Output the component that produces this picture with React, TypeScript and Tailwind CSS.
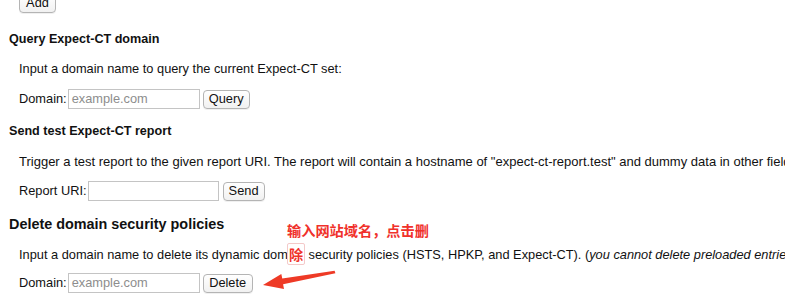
import React from "react";

const font = { fontFamily: '"Liberation Sans", Arial, "Noto Sans CJK SC", sans-serif' };

function Btn({ children, w }: { children: React.ReactNode; w: string }) {
  return (
    <button
      className={`h-[19px] ${w} rounded-[4px] border border-[#b4b4b4] bg-gradient-to-b from-white to-[#f1f1f1] text-[12.8px] leading-none text-[#111] flex items-center justify-center shadow-[0_1px_0_rgba(0,0,0,0.06)]`}
    >
      {children}
    </button>
  );
}

function Input({ placeholder, w }: { placeholder?: string; w: string }) {
  return (
    <div
      className={`h-[20px] ${w} border border-[#c4c4c4] bg-white text-[12.8px] text-[#8d8d8d] flex items-center pl-[3px] leading-none`}
    >
      {placeholder}
    </div>
  );
}

export default function App() {
  return (
    <div
      className="relative w-[785px] h-[295px] overflow-hidden bg-white text-[#111] text-[12.8px]"
      style={font}
    >
      <div className="flex flex-col">
        <div className="mt-[-6px] ml-[19px]">
          <Btn w="w-[37px]">Add</Btn>
        </div>
        <div className="mt-[16px] h-[20px] flex items-center pl-[9px] font-bold text-[12.6px]">
          Query Expect-CT domain
        </div>
        <div className="mt-[10px] h-[20px] flex items-center pl-[19px] whitespace-nowrap">
          Input a domain name to query the current Expect-CT set:
        </div>
        <div className="mt-[10px] h-[20px] flex items-center pl-[19px] gap-[3px]">
          <span className="mr-[-2px]">Domain:</span>
          <Input placeholder="example.com" w="w-[132px]" />
          <Btn w="w-[47px]">Query</Btn>
        </div>
        <div className="mt-[12px] h-[20px] flex items-center pl-[9px] font-bold text-[12.6px]">
          Send test Expect-CT report
        </div>
        <div className="mt-[11px] h-[20px] flex items-center pl-[19px] whitespace-nowrap text-[13px]">
          Trigger a test report to the given report URI. The report will contain a hostname of "expect-ct-report.test" and dummy data in other fields.
        </div>
        <div className="mt-[9px] h-[20px] flex items-center pl-[19px] gap-[3px]">
          <span className="mr-[-2px]">Report URI:</span>
          <Input w="w-[131px]" />
          <span className="ml-[1px]">
            <Btn w="w-[42px]">Send</Btn>
          </span>
        </div>
        <div className="mt-[14px] h-[20px] flex items-center pl-[9px] font-bold text-[14.4px]">
          Delete domain security policies
        </div>
        <div className="mt-[10px] h-[20px] flex items-center pl-[19px] whitespace-nowrap">
          Input a domain name to delete its dynamic domain security policies (HSTS, HPKP, and Expect-CT). (
          <i>you cannot delete preloaded entries</i>)
        </div>
        <div className="mt-[8px] h-[20px] flex items-center pl-[19px] gap-[3px]">
          <span className="mr-[-2px]">Domain:</span>
          <Input placeholder="example.com" w="w-[132px]" />
          <Btn w="w-[50px]">Delete</Btn>
        </div>
      </div>

      <div
        className="absolute left-[287px] top-[218px] text-[14.2px] font-bold leading-[24px] text-[#f0312b]"
        style={{
          fontFamily: '"Noto Sans CJK SC", sans-serif',
          textShadow:
            "0 0 1px #fff, 1px 1px 0 #fff, -1px -1px 0 #fff, 1px -1px 0 #fff, -1px 1px 0 #fff",
        }}
      >
        <div className="whitespace-nowrap">输入网站域名，点击删</div>
        <div>
          <span className="bg-white px-[1px] rounded-[2px] border border-[#f4c9c9]">除</span>
        </div>
      </div>

      <svg
        className="absolute left-[255px] top-[262px]"
        width="90"
        height="33"
        viewBox="0 0 90 33"
      >
        <polygon
          points="8,23 29,27 28.1,22.3 80.4,11.2 79.6,8.8 27.3,16.6 26.3,12"
          fill="#ee3a26"
        />
      </svg>
    </div>
  );
}
